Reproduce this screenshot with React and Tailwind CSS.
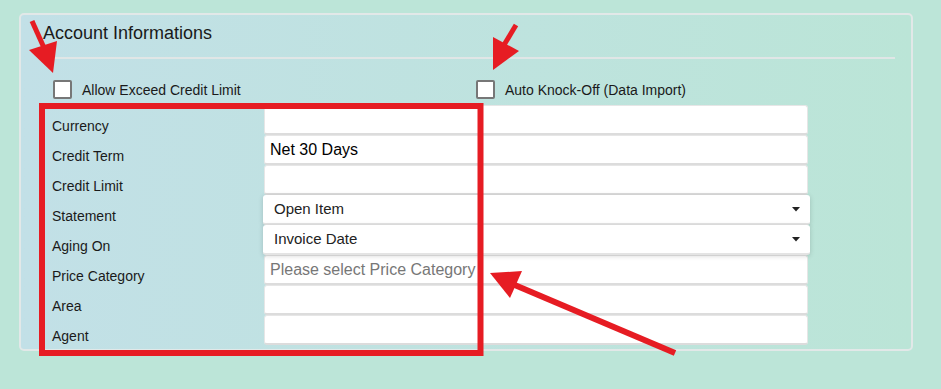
import React from "react";

function Checkbox({ label }) {
  return (
    <div className="flex items-center">
      <div className="w-[19px] h-[19px] rounded-[2px] border-2 border-[#777777] bg-white" />
      <span className="ml-[10px] mt-[1px] text-[14px] leading-[20px] text-[#1a1a1a]">{label}</span>
    </div>
  );
}

function TextInput({ value, placeholder }) {
  return (
    <div className="w-[544px] h-[30px] flex items-center bg-white rounded-[3px] border border-[#e6e6e6] border-b-2 border-b-[#dcdcdc] pl-[5px]">
      {value ? (
        <span className="text-[16px] text-black">{value}</span>
      ) : placeholder ? (
        <span className="text-[16px] text-[#777777]">{placeholder}</span>
      ) : null}
    </div>
  );
}

function SelectInput({ value }) {
  return (
    <div className="relative z-10 -ml-[1px] w-[547px] h-[30px] flex items-center justify-between bg-white rounded-[3px] border-b-2 border-b-[#e4e4e4] shadow-[0_1px_5px_rgba(0,0,0,0.16)] pl-[11px] pr-[10px]">
      <span className="text-[15px] text-[#222]">{value}</span>
      <svg width="8" height="5" viewBox="0 0 8 5">
        <polygon points="0,0 8,0 4,4.5" fill="#222" />
      </svg>
    </div>
  );
}

const rows = [
  { label: "Currency", type: "text" },
  { label: "Credit Term", type: "text", value: "Net 30 Days" },
  { label: "Credit Limit", type: "text" },
  { label: "Statement", type: "select", value: "Open Item" },
  { label: "Aging On", type: "select", value: "Invoice Date" },
  { label: "Price Category", type: "text", placeholder: "Please select Price Category" },
  { label: "Area", type: "text" },
  { label: "Agent", type: "text" },
];

export default function App() {
  return (
    <div
      className="relative w-[941px] h-[389px] overflow-hidden bg-[#bce5d8] pt-[13px] pl-[19px]"
      style={{ fontFamily: '"Liberation Sans", Arial, sans-serif' }}
    >
      <div className="w-[894px] h-[338px] rounded-[5px] border-2 border-[#e2e8e8] bg-gradient-to-r from-[#c2e0e7] to-[#bbe5d7] flex flex-col">
        <div className="pl-[21px] pr-[16px] pt-[8px]">
          <div className="pl-[1px] text-[18px] leading-[20px] text-[#1a1a1a]">Account Informations</div>
          <div className="mt-[14px] h-[2px] bg-[#e0e6e6]" />
        </div>
        <div className="mt-[20px] pl-[32px] flex">
          <div className="w-[423px]">
            <Checkbox label="Allow Exceed Credit Limit" />
          </div>
          <Checkbox label="Auto Knock-Off (Data Import)" />
        </div>
        <div className="mt-[5px] pl-[31px] flex flex-col">
          {rows.map((r) => (
            <div key={r.label} className="flex h-[30px]">
              <div className="w-[212px] pt-[11px] text-[14px] leading-[20px] text-[#1a1a1a]">{r.label}</div>
              {r.type === "select" ? (
                <SelectInput value={r.value} />
              ) : (
                <TextInput value={r.value} placeholder={r.placeholder} />
              )}
            </div>
          ))}
        </div>
      </div>

      <svg
        className="absolute left-0 top-0 pointer-events-none z-20"
        width="941"
        height="389"
        viewBox="0 0 941 389"
      >
        <rect x="42" y="106" width="438.5" height="247" fill="none" stroke="#e61c23" strokeWidth="6" />
        <line x1="32" y1="21" x2="45" y2="50" stroke="#e61c23" strokeWidth="5" />
        <polygon points="29,50 57,41 53,73" fill="#e61c23" />
        <line x1="516" y1="25" x2="504" y2="45" stroke="#e61c23" strokeWidth="5" />
        <polygon points="493,37 519,51 493,70" fill="#e61c23" />
        <line x1="675" y1="353" x2="510" y2="283" stroke="#e61c23" strokeWidth="6" />
        <polygon points="490,273 522,271 510,298" fill="#e61c23" />
      </svg>
    </div>
  );
}
